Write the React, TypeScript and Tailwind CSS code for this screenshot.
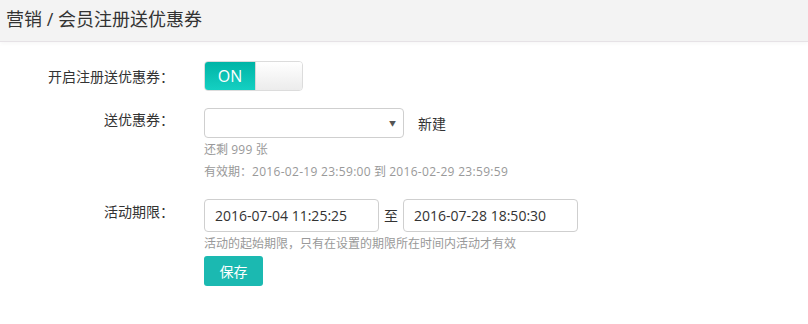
import React from "react";

const font = { fontFamily: '"Open Sans", "Noto Sans CJK SC", sans-serif' };

export default function App() {
  return (
    <div className="w-[808px] h-[324px] bg-white text-[#333]" style={font}>
      <div className="h-[42px] bg-[#f3f3f3] border-b border-[#e6e2e6] shadow-[0_2px_4px_rgba(0,0,0,0.03)] flex items-center pl-[6px] pb-[4px]">
        <span className="text-[18px] leading-[24px]">营销 / 会员注册送优惠券</span>
      </div>
      <div className="grid grid-cols-[174px_1fr] gap-x-[30px] pt-[19px]">
        {/* Row 1 */}
        <div className="text-right text-[14px] leading-[32px]">开启注册送优惠券：</div>
        <div>
          <div className="w-[99px] h-[30px] rounded-[4px] border border-[#dcdcdc] flex overflow-hidden">
            <div className="w-[50px] h-full bg-gradient-to-b from-[#00b4a6] to-[#14d0c2] text-white text-[16px] flex items-center justify-center">
              ON
            </div>
            <div className="flex-1 h-full bg-gradient-to-b from-[#ffffff] to-[#ececec] border-l border-[#d8d8d8]"></div>
          </div>
        </div>

        {/* Row 2 */}
        <div className="text-right text-[14px] leading-[24px] mt-[15px]">送优惠券：</div>
        <div className="mt-[15px]">
          <div className="flex items-center">
            <div className="w-[200px] h-[30px] rounded-[4px] border border-[#cfcfcf] flex items-center justify-end pr-[7px]">
              <span className="text-[7px] text-[#555] leading-none">▼</span>
            </div>
            <span className="ml-[14px] text-[14px]">新建</span>
          </div>
          <div className="mt-[1px] text-[12px] leading-[22px] text-[#999]">
            还剩 <span className="tracking-[0.3px]">999</span> 张
          </div>
          <div className="text-[12px] leading-[22px] text-[#999]">
            有效期：<span className="tracking-[0.3px]">2016-02-19 23:59:00</span> 到{" "}
            <span className="tracking-[0.3px]">2016-02-29 23:59:59</span>
          </div>
        </div>

        {/* Row 3 */}
        <div className="text-right text-[14px] leading-[26px] mt-[16px]">活动期限：</div>
        <div className="mt-[16px]">
          <div className="flex items-center">
            <div className="w-[175px] h-[33px] rounded-[4px] border border-[#cfcfcf] flex items-center pl-[10px] text-[14px]">
              2016-07-04 11:25:25
            </div>
            <span className="mx-[5px] text-[14px]">至</span>
            <div className="w-[175px] h-[33px] rounded-[4px] border border-[#cfcfcf] flex items-center pl-[10px] text-[14px]">
              2016-07-28 18:50:30
            </div>
          </div>
          <div className="mt-[1px] text-[12px] leading-[22px] text-[#999]">
            活动的起始期限，只有在设置的期限所在时间内活动才有效
          </div>
          <button className="mt-[1px] w-[59px] h-[30px] rounded-[3px] bg-[#1bb9b1] text-white text-[14px] flex items-center justify-center">
            保存
          </button>
        </div>
      </div>
    </div>
  );
}
